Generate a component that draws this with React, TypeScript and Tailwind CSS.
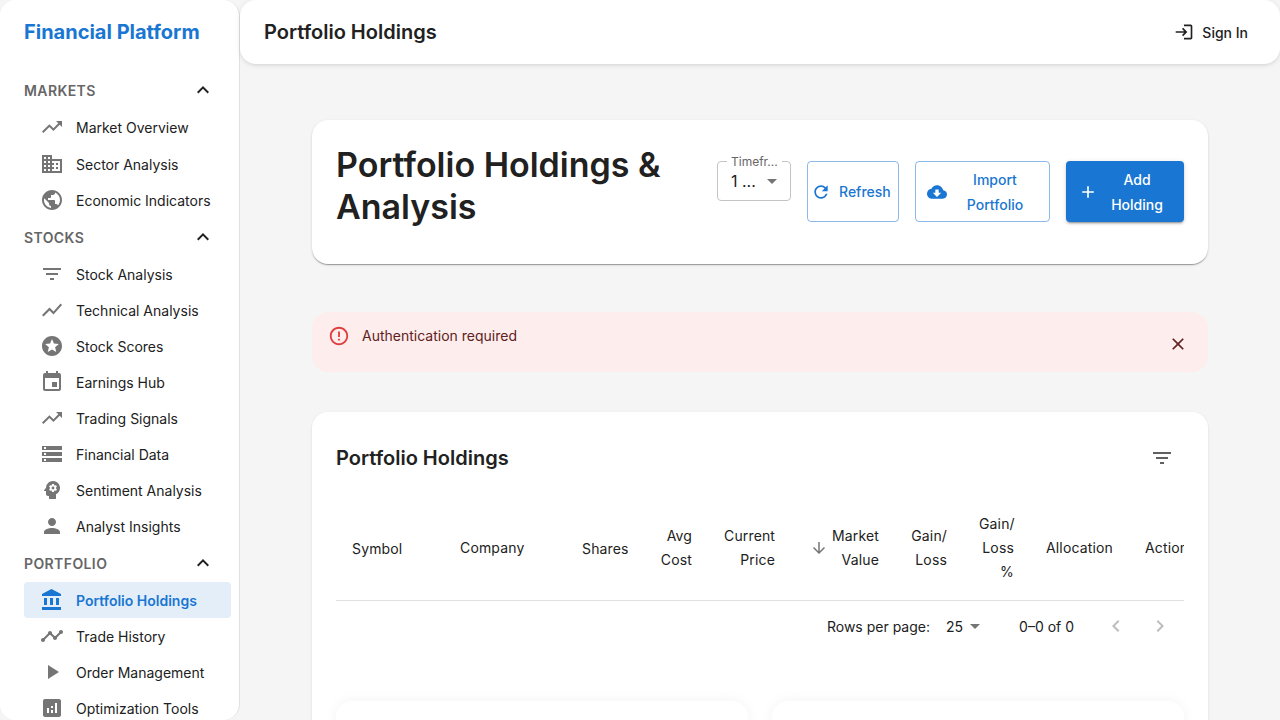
const paths = {
  trendingUp: "M16 6l2.29 2.29-4.88 4.88-4-4L2 16.59 3.41 18l6-6 4 4 6.3-6.29L22 12V6z",
  business: "M12 7V3H2v18h20V7H12zM6 19H4v-2h2v2zm0-4H4v-2h2v2zm0-4H4V9h2v2zm0-4H4V5h2v2zm4 12H8v-2h2v2zm0-4H8v-2h2v2zm0-4H8V9h2v2zm0-4H8V5h2v2zm10 12h-8v-2h2v-2h-2v-2h2v-2h-2V9h8v10zm-2-8h-2v2h2v-2zm0 4h-2v2h2v-2z",
  publicGlobe: "M12 2C6.48 2 2 6.48 2 12s4.48 10 10 10 10-4.48 10-10S17.52 2 12 2zm-1 17.93c-3.95-.49-7-3.85-7-7.93 0-.62.08-1.21.21-1.79L9 15v1c0 1.1.9 2 2 2v1.93zm6.9-2.54c-.26-.81-1-1.39-1.9-1.39h-1v-3c0-.55-.45-1-1-1H8v-2h2c.55 0 1-.45 1-1V7h2c1.1 0 2-.9 2-2v-.41c2.93 1.19 5 4.06 5 7.41 0 2.08-.8 3.97-2.1 5.39z",
  filterList: "M10 18h4v-2h-4v2zM3 6v2h18V6H3zm3 7h12v-2H6v2z",
  showChart: "M3.5 18.49l6-6.01 4 4L22 6.92l-1.41-1.41-7.09 7.97-4-4L2 16.99z",
  stars: "M11.99 2C6.47 2 2 6.48 2 12s4.47 10 9.99 10C17.52 22 22 17.52 22 12S17.52 2 11.99 2zm4.24 16L12 15.45 7.77 18l1.12-4.81-3.73-3.23 4.92-.42L12 5l1.92 4.53 4.92.42-3.73 3.23L16.23 18z",
  event: "M17 12h-5v5h5v-5zM16 1v2H8V1H6v2H5c-1.11 0-1.99.9-1.99 2L3 19c0 1.1.89 2 2 2h14c1.1 0 2-.9 2-2V5c0-1.1-.9-2-2-2h-1V1h-2zm3 18H5V8h14v11z",
  storage: "M2 20h20v-4H2v4zm2-3h2v2H4v-2zM2 4v4h20V4H2zm4 3H4V5h2v2zm-4 7h20v-4H2v4zm2-3h2v2H4v-2z",
  psychology: "M13 8.57c-.79 0-1.43.64-1.43 1.43s.64 1.43 1.43 1.43 1.43-.64 1.43-1.43-.64-1.43-1.43-1.43zM13 3C9.25 3 6.2 5.94 6.02 9.64L4.1 12.2c-.25.33-.01.8.4.8H6v3c0 1.1.9 2 2 2h1v3h7v-4.68c2.36-1.12 4-3.53 4-6.32 0-3.87-3.13-7-7-7zm3 7c0 .13-.01.26-.02.39l.83.66c.08.06.1.16.05.25l-.8 1.39c-.05.09-.16.12-.24.09l-.99-.4c-.21.16-.43.29-.67.39L14 13.83c-.01.1-.1.17-.2.17h-1.6c-.1 0-.18-.07-.2-.17l-.15-1.06c-.25-.1-.47-.23-.68-.39l-.99.4c-.09.03-.2 0-.25-.09l-.8-1.39c-.05-.08-.03-.19.05-.25l.84-.66c-.01-.13-.02-.26-.02-.39s.02-.27.04-.39l-.85-.66c-.08-.06-.1-.16-.05-.26l.8-1.38c.05-.09.15-.12.24-.09l1 .4c.2-.15.43-.29.67-.39L12 6.17c.02-.1.1-.17.2-.17h1.6c.1 0 .18.07.2.17l.15 1.06c.24.1.46.23.67.39l1-.4c.09-.03.2 0 .24.09l.8 1.38c.05.09.03.2-.05.26l-.85.66c.03.12.04.25.04.39z",
  person: "M12 12c2.21 0 4-1.79 4-4s-1.79-4-4-4-4 1.79-4 4 1.79 4 4 4zm0 2c-2.67 0-8 1.34-8 4v2h16v-2c0-2.66-5.33-4-8-4z",
  accountBalance: "M4 10v7h3v-7H4zm6 0v7h3v-7h-3zM2 22h19v-3H2v3zm14-12v7h3v-7h-3zm-4.5-9L2 6v2h19V6l-9.5-5z",
  timeline: "M23 8c0 1.1-.9 2-2 2-.18 0-.35-.02-.51-.07l-3.56 3.55c.05.16.07.34.07.52 0 1.1-.9 2-2 2s-2-.9-2-2c0-.18.02-.36.07-.52l-2.55-2.55c-.16.05-.34.07-.52.07s-.36-.02-.52-.07l-4.55 4.56c.05.16.07.33.07.51 0 1.1-.9 2-2 2s-2-.9-2-2 .9-2 2-2c.18 0 .35.02.51.07l4.56-4.55C8.02 9.36 8 9.18 8 9c0-1.1.9-2 2-2s2 .9 2 2c0 .18-.02.36-.07.52l2.55 2.55c.16-.05.34-.07.52-.07s.36.02.52.07l3.55-3.56C19.02 8.35 19 8.18 19 8c0-1.1.9-2 2-2s2 .9 2 2z",
  playArrow: "M8 5v14l11-7z",
  analytics: "M19 3H5c-1.1 0-2 .9-2 2v14c0 1.1.9 2 2 2h14c1.1 0 2-.9 2-2V5c0-1.1-.9-2-2-2zM9 17H7v-5h2v5zm4 0h-2v-3h2v3zm0-5h-2v-2h2v2zm4 5h-2V7h2v10z",
  expandLess: "M12 8l-6 6 1.41 1.41L12 10.83l4.59 4.58L18 14z",
  login: "M11 7 9.6 8.4l2.6 2.6H2v2h10.2l-2.6 2.6L11 17l5-5-5-5zm9 12h-8v2h8c1.1 0 2-.9 2-2V5c0-1.1-.9-2-2-2h-8v2h8v14z",
  refresh: "M17.65 6.35C16.2 4.9 14.21 4 12 4c-4.42 0-7.99 3.58-7.99 8s3.57 8 7.99 8c3.73 0 6.84-2.55 7.73-6h-2.08c-.82 2.33-3.04 4-5.65 4-3.31 0-6-2.69-6-6s2.69-6 6-6c1.66 0 3.14.69 4.22 1.78L13 11h7V4l-2.35 2.35z",
  cloudDownload: "M19.35 10.04C18.67 6.59 15.64 4 12 4 9.11 4 6.6 5.64 5.35 8.04 2.34 8.36 0 10.91 0 14c0 3.31 2.69 6 6 6h13c2.76 0 5-2.24 5-5 0-2.64-2.05-4.78-4.65-4.96zM17 13l-5 5-5-5h3V9h4v4h3z",
  add: "M19 13h-6v6h-2v-6H5v-2h6V5h2v6h6v2z",
  errorOutline: "M11 15h2v2h-2zm0-8h2v6h-2zm.99-5C6.47 2 2 6.48 2 12s4.47 10 9.99 10C17.52 22 22 17.52 22 12S17.52 2 11.99 2zM12 20c-4.42 0-8-3.58-8-8s3.58-8 8-8 8 3.58 8 8-3.58 8-8 8z",
  close: "M19 6.41 17.59 5 12 10.59 6.41 5 5 6.41 10.59 12 5 17.59 6.41 19 12 13.41 17.59 19 19 17.59 13.41 12z",
  arrowDownward: "m20 12-1.41-1.41L13 16.17V4h-2v12.17l-5.58-5.59L4 12l8 8 8-8z",
  arrowDropDown: "m7 10 5 5 5-5z",
  chevronLeft: "M15.41 16.59 10.83 12l4.58-4.59L14 6l-6 6 6 6z",
  chevronRight: "M8.59 16.59 13.17 12 8.59 7.41 10 6l6 6-6 6z",
};

function Icon({ d, className }: { d: string; className: string }) {
  return (
    <svg viewBox="0 0 24 24" fill="currentColor" className={`shrink-0 ${className}`}>
      <path d={d} />
    </svg>
  );
}

const navSections = [
  {
    title: "MARKETS",
    items: [
      { label: "Market Overview", icon: paths.trendingUp, spaced: true },
      { label: "Sector Analysis", icon: paths.business },
      { label: "Economic Indicators", icon: paths.publicGlobe },
    ],
  },
  {
    title: "STOCKS",
    items: [
      { label: "Stock Analysis", icon: paths.filterList },
      { label: "Technical Analysis", icon: paths.showChart },
      { label: "Stock Scores", icon: paths.stars },
      { label: "Earnings Hub", icon: paths.event },
      { label: "Trading Signals", icon: paths.trendingUp },
      { label: "Financial Data", icon: paths.storage },
      { label: "Sentiment Analysis", icon: paths.psychology },
      { label: "Analyst Insights", icon: paths.person },
    ],
  },
  {
    title: "PORTFOLIO",
    items: [
      { label: "Portfolio Holdings", icon: paths.accountBalance, active: true },
      { label: "Trade History", icon: paths.timeline },
      { label: "Order Management", icon: paths.playArrow },
      { label: "Optimization Tools", icon: paths.analytics },
    ],
  },
];

function Sidebar() {
  return (
    <aside className="w-[240px] h-full shrink-0 bg-white border-r border-[#e0e0e0] rounded-2xl overflow-hidden">
      <div className="h-[64px] pl-6 flex items-center">
        <h1 className="text-[20px] font-bold leading-8 text-[#1976d2]">Financial Platform</h1>
      </div>
      <nav className="pt-[7px] pl-6 pr-2">
        {navSections.map((section) => (
          <div key={section.title}>
            <div className="h-[38px] flex items-center justify-between pr-4">
              <span className="text-[14px] font-semibold tracking-[0.4px] text-[#666666]">{section.title}</span>
              <Icon d={paths.expandLess} className="w-6 h-6 text-[#212121]" />
            </div>
            <div>
              {section.items.map((item) => (
                <div
                  key={item.label}
                  className={`h-[36px] flex items-center pl-4 rounded ${item.spaced ? "mb-px" : ""} ${
                    item.active ? "bg-[#e3eef9] text-[#1976d2] font-semibold" : "text-[#212121]"
                  }`}
                >
                  <Icon d={item.icon} className={`w-6 h-6 mr-3 ${item.active ? "text-[#1976d2]" : "text-[#757575]"}`} />
                  <span className="text-[14px] whitespace-nowrap">{item.label}</span>
                </div>
              ))}
            </div>
          </div>
        ))}
      </nav>
    </aside>
  );
}

const columns = [
  { label: "Symbol", width: "w-[108px]", align: "text-left", pad: "pt-[17px] pb-[15px]" },
  { label: "Company", width: "w-[122px]", align: "text-left", pad: "py-4" },
  { label: "Shares", width: "w-[78px]", align: "text-right", pad: "pt-[17px] pb-[15px]" },
  { label: "Avg Cost", width: "w-[64px]", align: "text-right", pad: "py-4" },
  { label: "Current Price", width: "w-[83px]", align: "text-right", pad: "py-4" },
  { label: "Market Value", width: "w-[104px]", align: "text-right", pad: "py-4", sorted: true },
  { label: "Gain/ Loss", width: "w-[68px]", align: "text-right", pad: "py-4" },
  { label: "Gain/ Loss %", width: "w-[67px]", align: "text-right", pad: "py-4" },
  { label: "Allocation", width: "w-[99px]", align: "text-left", pad: "py-4" },
  { label: "Actions", width: "w-[100px]", align: "text-left", pad: "py-4" },
];

function HoldingsTable() {
  return (
    <div className="overflow-hidden">
      <table className="table-fixed w-[893px] border-collapse">
        <thead>
          <tr className="border-b border-[#e0e0e0]">
            {columns.map((col) => (
              <th key={col.label} className={`${col.width} ${col.align} ${col.pad} px-4 text-[14px] leading-6 font-normal tracking-[0.15px] text-[#212121] align-middle`}>
                {col.sorted ? (
                  <div className="flex items-center justify-end">
                    <Icon d={paths.arrowDownward} className="w-[18px] h-[18px] mr-px text-[#757575]" />
                    <span className="w-[50px]">{col.label}</span>
                  </div>
                ) : (
                  col.label
                )}
              </th>
            ))}
          </tr>
        </thead>
      </table>
    </div>
  );
}

export default function App() {
  return (
    <div className="h-screen flex overflow-hidden bg-[#f5f5f5] text-[#212121] font-['Inter',sans-serif]">
      <Sidebar />
      <div className="flex-1 min-w-0 flex flex-col">
        {/* Header */}
        <header className="h-[64px] shrink-0 bg-white rounded-2xl shadow-[0_2px_4px_-1px_rgba(0,0,0,0.1),0_1px_6px_rgba(0,0,0,0.06)] flex items-center justify-between pl-6 pr-8">
          <h2 className="text-[20px] font-semibold">Portfolio Holdings</h2>
          <div className="flex items-center gap-2 text-[14px] font-medium">
            <Icon d={paths.login} className="w-5 h-5" />
            Sign In
          </div>
        </header>

        {/* Content */}
        <main className="flex-1 min-h-0 overflow-hidden px-[72px] pt-14">
          <section className="h-[144px] bg-white rounded-2xl shadow-[0_2px_1px_-1px_rgba(0,0,0,0.2),0_1px_1px_rgba(0,0,0,0.14),0_1px_3px_rgba(0,0,0,0.12)] p-6 flex justify-between">
            <h1 className="text-[34px] font-semibold leading-[42px] w-[360px]">Portfolio Holdings &amp; Analysis</h1>
            <div className="flex items-start gap-4 pt-[17px]">
              <div className="relative w-[74px] h-[40px] border border-[#c4c4c4] rounded flex items-center pl-[13px]">
                <span className="absolute left-[9px] top-[-7px] bg-white px-1 text-[12px] leading-[14px] text-[#666666]">Timefr...</span>
                <span className="text-[16px]">1 ...</span>
                <Icon d={paths.arrowDropDown} className="absolute right-[6px] top-[7px] w-6 h-6 text-[#757575]" />
              </div>
              <button className="w-[92px] h-[61px] border border-[#1976d280] rounded flex items-center pl-[3px] text-[14px] font-medium text-[#1976d2]">
                <Icon d={paths.refresh} className="w-5 h-5 mr-2" />
                Refresh
              </button>
              <button className="w-[135px] h-[61px] border border-[#1976d280] rounded flex items-center pl-[11px] text-[14px] leading-[25px] font-medium text-[#1976d2]">
                <Icon d={paths.cloudDownload} className="w-5 h-5 mr-2" />
                <span className="flex-1 text-center pr-[14px]">Import<br />Portfolio</span>
              </button>
              <button className="w-[118px] h-[61px] bg-[#1976d2] rounded shadow-[0_3px_1px_-2px_rgba(0,0,0,0.2),0_2px_2px_rgba(0,0,0,0.14),0_1px_5px_rgba(0,0,0,0.12)] flex items-center pl-[12px] text-[14px] leading-[25px] font-medium text-white">
                <Icon d={paths.add} className="w-5 h-5 mr-[6px]" />
                <span className="flex-1 text-center pr-[14px]">Add<br />Holding</span>
              </button>
            </div>
          </section>

          {/* Alert */}
          <div className="mt-12 h-[60px] bg-[#fdeded] rounded-2xl flex items-start justify-between pl-4 pr-5 pt-[13px]">
            <div className="flex items-start gap-[12px] text-[14px] leading-[22px] text-[#5f2120]">
              <Icon d={paths.errorOutline} className="w-[22px] h-[22px] text-[#e03e3e]" />
              <span>Authentication required</span>
            </div>
            <Icon d={paths.close} className="w-5 h-5 mt-[9px] text-[#5f2120]" />
          </div>

          {/* Holdings card */}
          <section className="mt-10 bg-white rounded-2xl shadow-[0_1px_3px_rgba(0,0,0,0.1)] px-6 pt-6 h-[400px]">
            <div className="h-[44px] flex items-center justify-between">
              <h3 className="text-[20px] font-semibold">Portfolio Holdings</h3>
              <Icon d={paths.filterList} className="w-6 h-6 mr-[10px] text-[#616161]" />
            </div>
            <div className="mt-4">
              <HoldingsTable />
            </div>
            <div className="h-[52px] flex items-center justify-end text-[14px] text-[#212121] pr-[12px] pb-[2px]">
              <span>Rows per page:</span>
              <span className="ml-4">25</span>
              <Icon d={paths.arrowDropDown} className="w-6 h-6 text-[#757575]" />
              <span className="ml-[32px]">0–0 of 0</span>
              <Icon d={paths.chevronLeft} className="w-6 h-6 ml-[30px] text-[#bdbdbd]" />
              <Icon d={paths.chevronRight} className="w-6 h-6 ml-[20px] text-[#bdbdbd]" />
            </div>
            <div className="mt-12 grid grid-cols-2 gap-6">
              <div className="h-[100px] bg-white rounded-2xl shadow-[0_0_14px_rgba(0,0,0,0.05)]" />
              <div className="h-[100px] bg-white rounded-2xl shadow-[0_0_14px_rgba(0,0,0,0.05)]" />
            </div>
          </section>
        </main>
      </div>
    </div>
  );
}
